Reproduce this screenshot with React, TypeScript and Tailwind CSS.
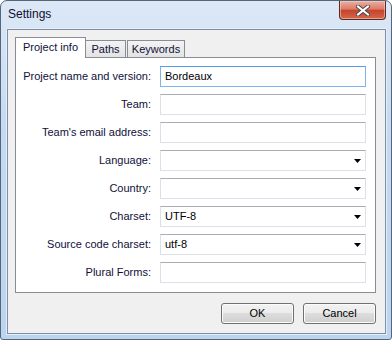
import React from "react";

type Row = {
  label: string;
  value?: string;
  kind: "text" | "select";
  focused?: boolean;
};

const rows: Row[] = [
  { label: "Project name and version:", value: "Bordeaux", kind: "text", focused: true },
  { label: "Team:", kind: "text" },
  { label: "Team's email address:", kind: "text" },
  { label: "Language:", kind: "select" },
  { label: "Country:", kind: "select" },
  { label: "Charset:", value: "UTF-8", kind: "select" },
  { label: "Source code charset:", value: "utf-8", kind: "select" },
  { label: "Plural Forms:", kind: "text" },
];

function Field({ row }: { row: Row }) {
  const border = row.focused
    ? "border border-[#7eb4ea] border-t-[#569de5]"
    : "border border-[#dde1e7] border-t-[#abadb3]";
  return (
    <div className={`h-[21px] bg-white flex items-center justify-between pl-[4px] pr-[3px] ${border}`}>
      <span className="text-[11px] text-black leading-none">{row.value ?? ""}</span>
      {row.kind === "select" && (
        <svg width="7" height="4" viewBox="0 0 7 4" className="mr-[1px]">
          <path d="M0 0H7L3.5 4Z" fill="#000" />
        </svg>
      )}
    </div>
  );
}

function WinButton({ children }: { children: React.ReactNode }) {
  return (
    <button className="w-[73px] h-[21px] rounded-[3px] border border-[#707070] bg-[linear-gradient(#f2f2f2_0%,#ebebeb_50%,#dddddd_50%,#cfcfcf_100%)] shadow-[inset_0_0_0_1px_#fbfbfb] text-[11px] text-black leading-none">
      {children}
    </button>
  );
}

export default function App() {
  return (
    <div className="w-[392px] h-[340px] flex flex-col border border-[#55657a] rounded-t-[7px] rounded-b-[3px] bg-[linear-gradient(180deg,#dce8f6_0%,#c6dbf2_35%,#bcd4ee_100%)] font-['Liberation_Sans',Arial,sans-serif] overflow-hidden">
      {/* Title bar */}
      <div className="h-[28px] flex items-start justify-between">
        <div className="pl-[7px] pt-[7px] text-[12px] text-[#101030] leading-none">Settings</div>
        <div className="mr-[5px] w-[47px] h-[19px] rounded-b-[4px] border border-t-0 border-[#5b2a22] bg-[linear-gradient(#eab0a2_0%,#dc7a66_45%,#c7432c_52%,#cf6a4c_100%)] shadow-[inset_0_0_0_1px_rgba(255,220,210,0.5)] flex items-center justify-center">
          <svg width="14" height="11" viewBox="0 0 14 11">
            <path d="M2 1.5L12 9.5M12 1.5L2 9.5" stroke="#4a4a4a" strokeWidth="4" strokeLinecap="square" />
            <path d="M2 1.5L12 9.5M12 1.5L2 9.5" stroke="#ffffff" strokeWidth="2" strokeLinecap="square" />
          </svg>
        </div>
      </div>

      {/* Client area */}
      <div className="ml-[6px] w-[379px] h-[305px] border border-[#7d8fa6] bg-[#f0f0f0] shadow-[0_0_0_1px_#e4eefa] pl-[7px] pt-[7px]">
        {/* Tabs */}
        <div className="flex items-end h-[20px] text-[11px] text-[#10103a] leading-none">
          <div className="relative z-10 -mb-px w-[71px] h-[21px] bg-white border border-b-0 border-[#898c95] flex items-center justify-center pb-[2px]">
            Project info
          </div>
          <div className="w-[40px] h-[17px] border border-l-0 border-b-0 border-[#898c95] bg-[linear-gradient(#f3f3f3,#e3e3e3)] flex items-center justify-center pt-[1px]">
            Paths
          </div>
          <div className="ml-px w-[58px] h-[17px] border border-b-0 border-[#898c95] bg-[linear-gradient(#f3f3f3,#e3e3e3)] flex items-center justify-center pt-[1px]">
            Keywords
          </div>
        </div>

        {/* Panel */}
        <div className="w-[361px] h-[236px] border border-[#898c95] bg-white pt-[8px]">
          <div className="grid grid-cols-[135px_206px] gap-x-[9px] gap-y-[7px] items-center">
            {rows.map((row) => (
              <React.Fragment key={row.label}>
                <div className="text-right text-[11px] text-[#10103a] leading-none">{row.label}</div>
                <Field row={row} />
              </React.Fragment>
            ))}
          </div>
        </div>

        {/* Buttons */}
        <div className="w-[361px] mt-[10px] flex justify-end gap-[9px]">
          <WinButton>OK</WinButton>
          <WinButton>Cancel</WinButton>
        </div>
      </div>
    </div>
  );
}
